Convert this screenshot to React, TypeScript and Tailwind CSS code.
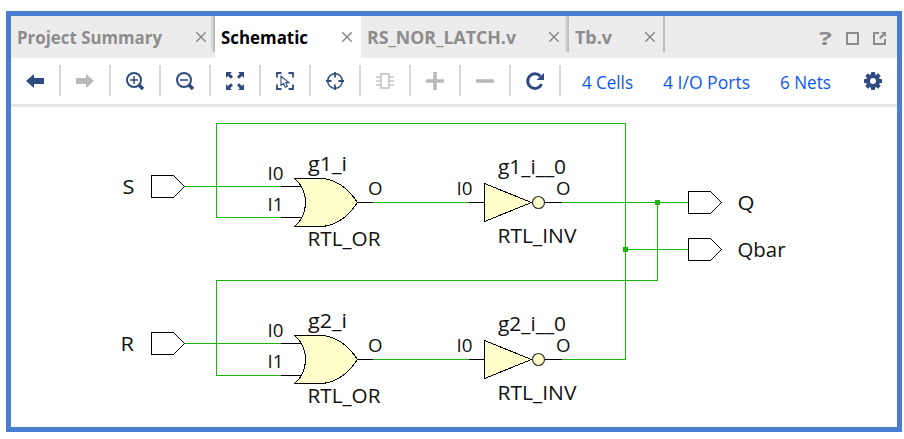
import React from "react";

const NAVY = "#2f4b82";
const GRAY = "#b9b9b9";
const WIRE = "#1cb20c";

function Close() {
  return (
    <svg width="12" height="12" viewBox="0 0 12 12" className="shrink-0">
      <path d="M1.3 1.3 10.7 10.7M10.7 1.3 1.3 10.7" stroke="#8c8c8c" strokeWidth="1.6" fill="none" />
    </svg>
  );
}

function Divider() {
  return (
    <div className="flex h-9 w-1 shrink-0">
      <div className="w-0.5 bg-[#d9d9d9]" />
      <div className="w-0.5 bg-[#bfbfbf]" />
    </div>
  );
}

function Label({ w, children }: { w: number; children: string }) {
  return (
    <svg width={w} height="26" className="block shrink-0 overflow-visible">
      <text x="0" y="18" fill="currentColor" textLength={w} lengthAdjust="spacingAndGlyphs">
        {children}
      </text>
    </svg>
  );
}

const S = { fill: "none", stroke: NAVY };

const tools: React.ReactNode[] = [
  <path d="M0 9 8 2V6H18V12H8V16Z" fill={NAVY} />,
  <path d="M18 9 10 2V6H0V12H10V16Z" fill={GRAY} />,
  <g {...S}>
    <circle cx="8" cy="8" r="7" strokeWidth="2" />
    <path d="M4 8H12M8 4V12" strokeWidth="1.5" />
    <path d="M13 13 17 17" strokeWidth="3.6" />
  </g>,
  <g {...S}>
    <circle cx="8" cy="8" r="7" strokeWidth="2" />
    <path d="M4 8H12" strokeWidth="1.6" />
    <path d="M13 13 17 17" strokeWidth="3.6" />
  </g>,
  <g>
    <path d="M0 0H6L4.2 1.8 7 4.8 5 6.8 1.9 4 0 6ZM18 0V6L16.1 4 13 6.8 11 4.8 13.8 1.8 12 0ZM0 18V12L1.9 14 5 11.2 7 13.2 4.2 16.2 6 18ZM18 18H12L13.8 16.2 11 13.2 13 11.2 16.1 14 18 12Z" fill={NAVY} />
  </g>,
  <g {...S}>
    <path d="M1 5.5V1H5.5M12.5 1H17V5.5M17 12.5V17H12.5M5.5 17H1V12.5" strokeWidth="1.8" />
    <path d="M5 4.2V13.4L7.6 11.4 9.4 15.2 11.4 14.2 9.8 10.6H13Z" strokeWidth="1.1" />
  </g>,
  <g {...S}>
    <circle cx="9" cy="9" r="7.3" strokeWidth="1.5" />
    <path d="M9 0V5.5M9 12.5V18M0 9H5.5M12.5 9H18" strokeWidth="1.8" />
  </g>,
  <g fill="none" stroke="#c4c4c4">
    <rect x="5" y="2" width="8" height="14" strokeWidth="1.6" />
    <path d="M7 1.5H11M0 5H5M0 9H5M0 13H5M13 5H18M13 9H18M13 13H18" strokeWidth="1.6" />
  </g>,
  <path d="M7.2 0H10.8V7.2H18V10.8H10.8V18H7.2V10.8H0V7.2H7.2Z" fill={GRAY} />,
  <path d="M0 7.2H18V10.8H0Z" fill={GRAY} />,
  <g>
    <path d="M14.4 4.2A7.3 7.3 0 1 0 15.6 12.2" fill="none" stroke={NAVY} strokeWidth="3" />
    <path d="M18 1V8H10.5Z" fill={NAVY} />
  </g>,
];

function T({ x, y, w, s = 20.5, children }: { x: number; y: number; w: number; s?: number; children: string }) {
  return (
    <text x={x} y={y} fontSize={s} textLength={w} lengthAdjust="spacingAndGlyphs">
      {children}
    </text>
  );
}

function Port({ x, y, w = 22 }: { x: number; y: number; w?: number }) {
  return <path d={`M${x} ${y - 11}h${w}l11 11l-11 11h-${w}z`} fill="#fff" stroke="#000" />;
}

function OrGate({ y, b }: { y: number; b: number }) {
  return (
    <g stroke="#000">
      <path d={`M280.5 ${y - 16}H302M280.5 ${b}H302M357.5 ${y}H373`} />
      <path
        d={`M294.5 ${y - 24}H322.5Q343 ${y - 22} 357.5 ${y}Q343 ${y + 22} 322.5 ${y + 24}H294.5Q305.5 ${y + 15} 305.5 ${y}Q305.5 ${y - 15} 294.5 ${y - 24}Z`}
        fill="#ffffcc"
      />
    </g>
  );
}

function Inverter({ y }: { y: number }) {
  return (
    <g stroke="#000">
      <path d={`M469 ${y}H484.5M545 ${y}H562`} />
      <path d={`M484.5 ${y - 19}V${y + 19}L531.5 ${y}Z`} fill="#ffffcc" />
      <circle cx="538.5" cy={y} r="6" fill="#ffffcc" stroke="#333" strokeWidth="1.2" shapeRendering="auto" />
    </g>
  );
}

function Schematic() {
  return (
    <svg width="886" height="320" viewBox="11 107 886 320" className="block">
      <g shapeRendering="crispEdges" fill="none">
        <path
          stroke={WIRE}
          d="M184 186.5H281M281 217.5H216.5V123.5H625.5V359.5H562M373 202.5H469M562 202.5H688M657.5 202.5V280.5H216.5V375.5H281M184 343.5H281M373 359.5H469M625.5 249.5H688"
        />
        <path fill={WIRE} d="M623 247h5v5h-5zM655 200h5v5h-5z" />
        <Port x={151.5} y={186.5} />
        <Port x={151.5} y={343.5} />
        <Port x={688.5} y={202.5} />
        <Port x={688.5} y={249.5} />
        <OrGate y={202.5} b={217.5} />
        <OrGate y={359.5} b={375.5} />
        <Inverter y={202.5} />
        <Inverter y={359.5} />
      </g>
      <g fill="#111">
        <T x={122.5} y={193.5} w={12}>S</T>
        <T x={120.5} y={350.5} w={13.5}>R</T>
        <T x={308} y={171} w={39}>g1_i</T>
        <T x={308} y={328} w={39}>g2_i</T>
        <T x={307.5} y={246} w={73}>RTL_OR</T>
        <T x={307.5} y={403} w={73}>RTL_OR</T>
        <T x={498} y={174} w={68}>g1_i__0</T>
        <T x={498} y={331} w={68}>g2_i__0</T>
        <T x={497.5} y={243} w={79}>RTL_INV</T>
        <T x={497.5} y={400} w={79}>RTL_INV</T>
        <T x={737.5} y={210} w={17}>Q</T>
        <T x={737.5} y={257} w={48}>Qbar</T>
        <T x={267.5} y={179.5} w={16} s={18}>I0</T>
        <T x={267.5} y={210.5} w={16} s={18}>I1</T>
        <T x={267.5} y={336.5} w={16} s={18}>I0</T>
        <T x={267.5} y={367.5} w={16} s={18}>I1</T>
        <T x={368} y={194.5} w={14.5} s={18}>O</T>
        <T x={368} y={351.5} w={14.5} s={18}>O</T>
        <T x={456.5} y={194.5} w={16} s={18}>I0</T>
        <T x={456.5} y={351.5} w={16} s={18}>I0</T>
        <T x={556} y={194.5} w={14.5} s={18}>O</T>
        <T x={556} y={351.5} w={14.5} s={18}>O</T>
      </g>
    </svg>
  );
}

export default function App() {
  return (
    <div className="h-[439px] w-[904px] bg-white pt-[11px] pl-[6px] font-['Open_Sans','Noto_Sans',sans-serif]">
      <div className="flex h-[421px] w-[896px] flex-col border-[5px] border-[#4a7dcf] bg-white">
        <div className="flex h-[42px] shrink-0 bg-[#ececec] text-[18px] font-bold text-[#8c8c8c]">
          <div className="flex w-[200px] pt-[10px] pl-[6px]">
            <Label w={145}>Project Summary</Label>
            <div className="ml-[33px] pt-[5px]"><Close /></div>
          </div>
          <div className="flex h-9 w-1 shrink-0 -mr-1 relative">
            <div className="w-0.5 bg-[#d9d9d9]" />
            <div className="w-0.5 bg-[#bfbfbf]" />
          </div>
          <div className="ml-1 flex w-[146px] bg-white pt-[10px] pl-[6px] text-black">
            <Label w={87}>Schematic</Label>
            <div className="ml-[33px] pt-[5px]"><Close /></div>
          </div>
          <div className="flex w-[204px] pt-[10px] pl-[6px]">
            <Label w={149}>RS_NOR_LATCH.v</Label>
            <div className="ml-[32px] pt-[5px]"><Close /></div>
          </div>
          <Divider />
          <div className="flex w-[94px] pt-[10px] pl-[6px]">
            <Label w={37}>Tb.v</Label>
            <div className="ml-[32px] pt-[5px]"><Close /></div>
          </div>
          <div className="h-9 w-0.5 bg-[#bfbfbf]" />
          <div className="ml-auto flex gap-[14px] pt-[16px] pr-[11px]">
            <svg width="13" height="14" className="overflow-visible">
              <text x="0" y="13" fontSize="18" fill="currentColor" textLength="13" lengthAdjust="spacingAndGlyphs">?</text>
            </svg>
            <svg width="13" height="13" viewBox="0 0 13 13">
              <rect x="1" y="1" width="11" height="11" fill="none" stroke="#8c8c8c" strokeWidth="2" />
            </svg>
            <svg width="13" height="13" viewBox="0 0 13 13">
              <path d="M6 1H1V12H12V7" fill="none" stroke="#8c8c8c" strokeWidth="2" />
              <path d="M8 0H13V5L11.3 3.4 7.6 7.2 6 5.6 9.7 1.8Z" fill="#8c8c8c" />
            </svg>
          </div>
        </div>
        <div className="flex h-[49px] shrink-0 border-b-[3px] border-[#e6e6e6] pt-[7px] text-[18px] text-[#0a58f5]">
          {tools.map((icon, i) => (
            <div key={i} className="flex h-[31px] w-[50px] shrink-0 items-center justify-center border-r-2 border-[#d9d9d9]">
              <svg width="18" height="18" viewBox="0 0 18 18" className="overflow-visible">{icon}</svg>
            </div>
          ))}
          <div className="flex gap-[30px] pt-[6px] pl-[21px]">
            <Label w={51}>4 Cells</Label>
            <Label w={87}>4 I/O Ports</Label>
            <Label w={51}>6 Nets</Label>
          </div>
          <svg width="18" height="18" viewBox="-9 -9 18 18" className="mt-[7px] ml-auto mr-[15px]">
            <circle r="5" fill="none" stroke={NAVY} strokeWidth="4" />
            {[0, 45, 90, 135, 180, 225, 270, 315].map((a) => (
              <rect key={a} x="-2" y="-9" width="4" height="4" rx="0.5" fill={NAVY} transform={`rotate(${a})`} />
            ))}
          </svg>
        </div>
        <Schematic />
      </div>
    </div>
  );
}
